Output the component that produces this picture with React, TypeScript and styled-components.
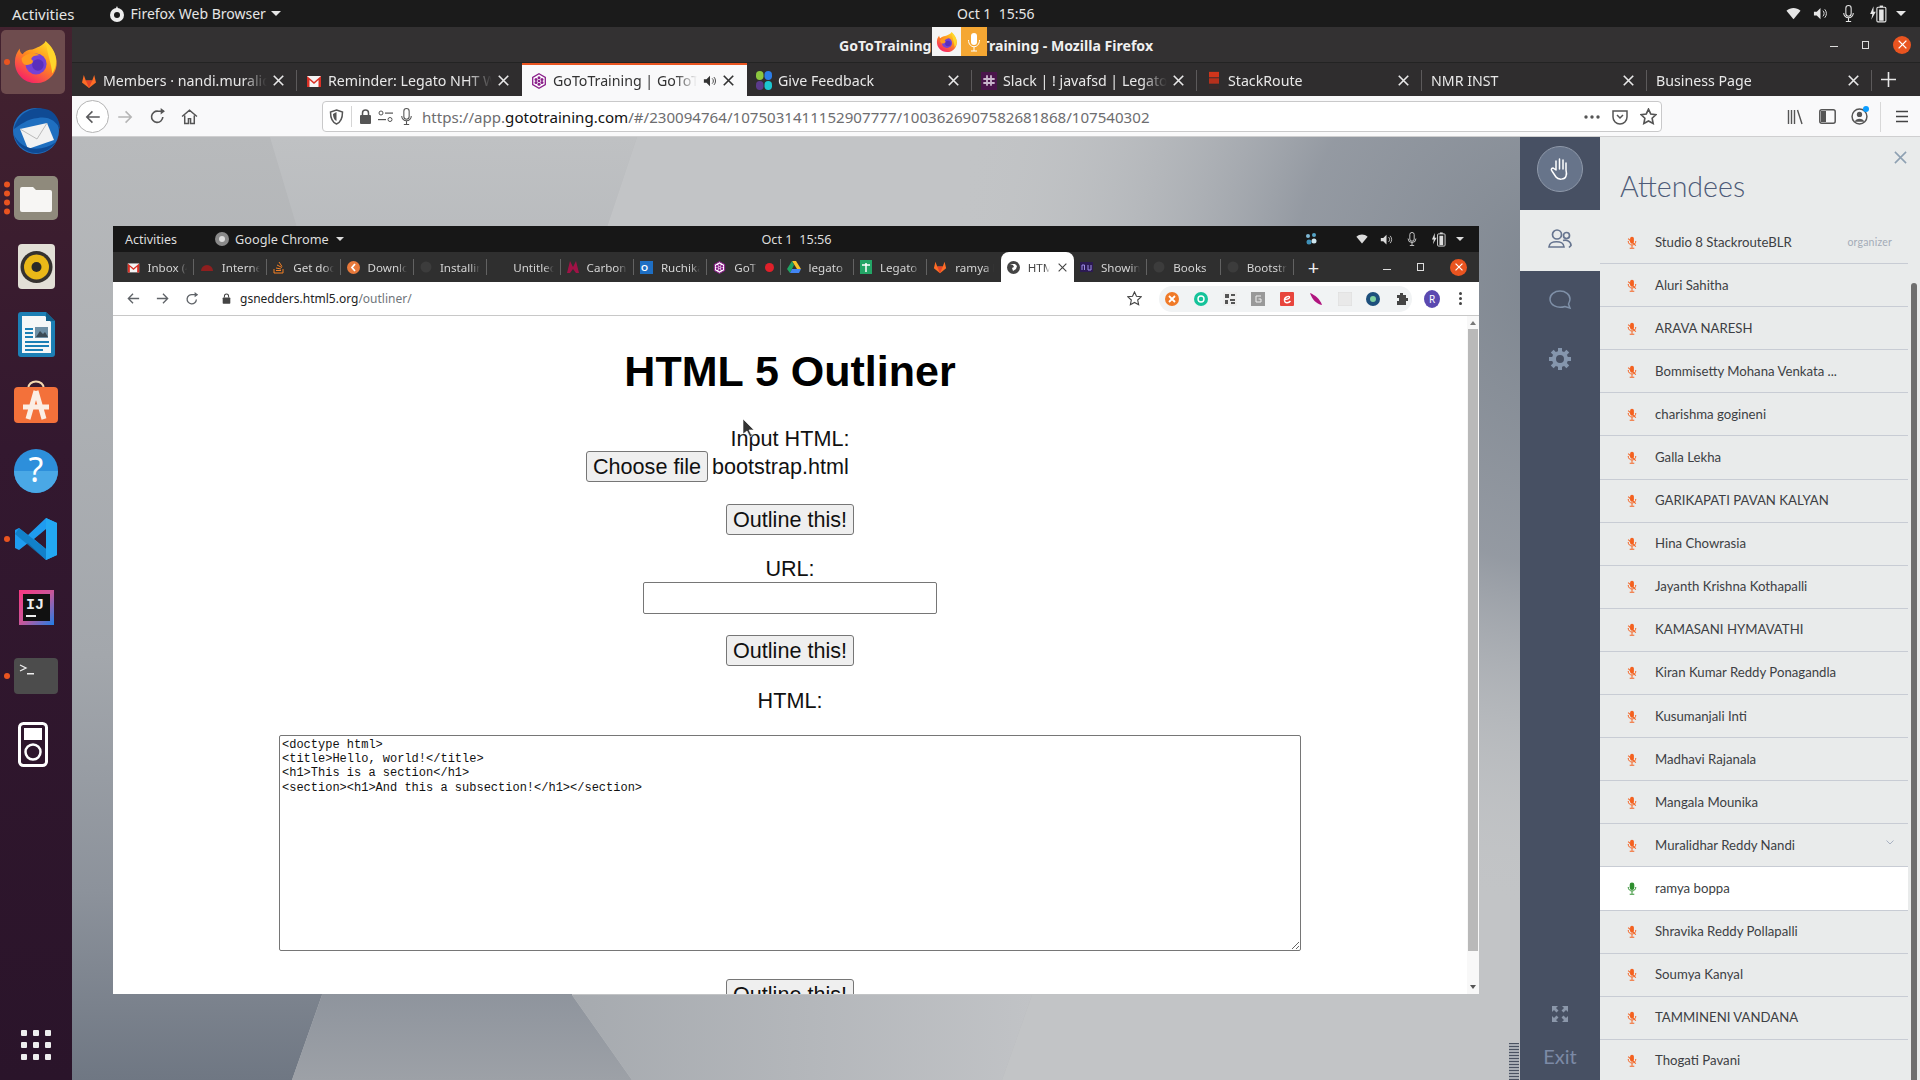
import React from "react";
import styled, { createGlobalStyle } from "styled-components";

const Global = createGlobalStyle`
  html, body { margin: 0; padding: 0; width: 1920px; height: 1080px; overflow: hidden; background: #000; }
  #root { width: 1920px; height: 1080px; }
  * { box-sizing: border-box; }
`;

const UI = `"Noto Sans", "Open Sans", sans-serif`;

const Screen = styled.div`
  width: 1920px; height: 1080px; display: flex; flex-direction: column; overflow: hidden; font-family: ${UI};
`;
const TopBar = styled.header`
  height: 27px; flex: none; background: #1b1b1b; color: #e6e6e6; display: grid; grid-template-columns: 945px auto 1fr;
  align-items: center; font-size: 14px; padding: 0 14px 0 12px;
`;
const TopLeft = styled.div`display: flex; align-items: center;`;
const ActivitiesLabel = styled.span`font-size: 15px;`;
const InnerActivities = styled.span`font-size: 12.5px;`;
const AppMenu = styled.div`display: flex; align-items: center; gap: 6px; margin-left: 34px;`;
const Caret = styled.span<{ $s?: number; $ml?: number }>`
  display: inline-block; width: 0; height: 0; border-left: ${p => p.$s ?? 5}px solid transparent; border-right: ${p => p.$s ?? 5}px solid transparent;
  border-top: ${p => p.$s ?? 5}px solid currentColor; margin-left: ${p => p.$ml ?? 4}px;
`;
const Tray = styled.div<{ $gap?: number }>`display: flex; align-items: center; justify-content: flex-end; gap: ${p => p.$gap ?? 12}px;`;
const Body = styled.div`flex: 1; display: flex; min-height: 0;`;
const Dock = styled.nav`
  width: 72px; flex: none; background: linear-gradient(180deg, #43222f 0%, #33182f 40%, #2a142a 100%);
  display: flex; flex-direction: column; padding-top: 1px;
`;
const DockItem = styled.div`
  height: 68.2px; flex: none; display: flex; align-items: center; justify-content: center; position: relative;
`;
const ActiveTile = styled.div`
  width: 64px; height: 64px; border-radius: 5px; background: #6e4c4e; display: flex; align-items: center; justify-content: center; margin-left: -6px; padding-left: 6px;
`;
const Dots = styled.div`
  position: absolute; left: 4px; top: 50%; transform: translateY(-50%); display: flex; flex-direction: column; gap: 3px;
`;
const Dot = styled.span`width: 6px; height: 6px; border-radius: 50%; background: #e95420; display: block;`;
const DockSpacer = styled.div`flex: 1;`;
const AppGrid = styled.div`
  display: grid; grid-template-columns: repeat(3, 6px); gap: 6px; justify-content: center; padding-bottom: 20px;
  span { width: 6px; height: 6px; background: #eee; border-radius: 1px; display: block; }
`;
const FirefoxWin = styled.main`flex: 1; display: flex; flex-direction: column; min-width: 0;`;
const TitleBar = styled.div`
  height: 36px; flex: none; background: #333132; color: #f0f0f0; display: grid; grid-template-columns: 1fr auto 1fr; align-items: center;
  font-size: 14.1px; font-weight: 700; position: relative; border-bottom: 1px solid #232323;
`;
const TitleText = styled.span`grid-column: 2; padding-top: 2px;`;
const Share = styled.div`position: absolute; left: 860px; top: 0; height: 29px; display: flex;`;
const ShareFox = styled.div`width: 29px; background: #f4f4f4; display: flex; align-items: center; justify-content: center;`;
const ShareMic = styled.div`width: 26px; background: #f5a733; display: flex; align-items: center; justify-content: center;`;
const WinBtns = styled.div<{ $gap?: number }>`
  grid-column: 3; display: flex; align-items: center; justify-content: flex-end; gap: ${p => p.$gap ?? 24}px; padding-right: 9px;
`;
const MinBtn = styled.span`width: 8px; height: 1px; background: #ddd; display: block; margin-top: 4px;`;
const RestoreBtn = styled.span`width: 7px; height: 8px; border: 1px solid #ddd; display: block;`;
const CloseBtn = styled.span<{ $s?: number }>`
  width: ${p => p.$s ?? 18}px; height: ${p => p.$s ?? 18}px; border-radius: 50%; background: #e95420; color: #fff; display: flex; align-items: center; justify-content: center;
`;
const TabStrip = styled.div`height: 33px; flex: none; display: flex; background: #2f2d2e; align-items: stretch;`;
const Tab = styled.div<{ $active?: boolean; $sep?: boolean }>`
  width: 225px; flex: none; display: flex; align-items: center; gap: 6px; padding: 0 13px 0 9px; font-size: 14.2px; position: relative;
  color: ${p => (p.$active ? "#333" : "#e8e8e8")};
  background: ${p => (p.$active ? "#f9f9fa" : "transparent")};
  border-top: 2px solid ${p => (p.$active ? "#e95420" : "transparent")};
  ${p => p.$sep && `&::after { content: ""; position: absolute; right: 0; top: 5px; bottom: 5px; width: 1px; background: #5c5a5b; }`}
`;
const TabTitle = styled.span`
  flex: 1; white-space: nowrap; overflow: hidden; min-width: 0; margin-left: 0;
  mask-image: linear-gradient(90deg, #000 85%, transparent 100%);
`;
const NewTab = styled.div`flex: 1; display: flex; align-items: center; justify-content: flex-start; padding-left: 9px; color: #e8e8e8;`;
const NavBar = styled.div`
  height: 41px; flex: none; background: #f9f9fa; display: flex; align-items: center; padding: 1px 0 0 4px; border-bottom: 1px solid #cfcfd0; color: #5a5a5c;
`;
const BackBtn = styled.div`
  width: 33px; height: 33px; border-radius: 50%; border: 1px solid #b4b4b4; background: #fff; display: flex; align-items: center; justify-content: center;
`;
const NavIcon = styled.div<{ $w?: number; $dim?: boolean }>`
  width: ${p => p.$w ?? 32}px; flex: none; display: flex; align-items: center; justify-content: center; position: relative; color: ${p => (p.$dim ? "#b5b5b5" : "#555")};
`;
const UrlBar = styled.div`
  width: 1340px; height: 31px; margin-left: 117px; flex: none; background: #fff; border: 1px solid #c9c9ca; border-radius: 4px;
  display: flex; align-items: center; padding: 0 4px 0 6px; font-size: 15.1px; color: #6d6d6f;
`;
const UrlSep = styled.span`width: 1px; height: 21px; background: #d5d5d5; margin: 0 7px;`;
const UrlPerm = styled.svg`margin-left: 6px;`;
const UrlMic = styled.span`display: flex; color: #555; margin-left: 5px;`;
const UrlText = styled.span`flex: 1; white-space: nowrap; margin-left: 7px; b { color: #111; font-weight: 400; }`;
const UrlAction = styled.svg`margin-left: 12px;`;
const NavRight = styled.div`flex: 1; display: flex; align-items: center; justify-content: flex-end; padding-right: 3px;`;
const NavSep = styled.span`width: 1px; height: 30px; background: #d8d8d8; margin: 0 6px 0 5px;`;
const SyncDot = styled.span`position: absolute; right: 6px; top: -2px; width: 6px; height: 6px; border-radius: 50%; background: #0a9dff;`;
const Content = styled.div`flex: 1; display: flex; min-height: 0;`;
const Desktop = styled.section`
  flex: 1; position: relative; padding: 90px 41px 0 41px; overflow: hidden; background: #a9acb0;
`;
const Wallpaper = styled.svg`position: absolute; left: 0; top: 0;`;
const Grip = styled.div`
  position: absolute; right: 1px; bottom: 0; width: 10px; height: 37px; background: repeating-linear-gradient(180deg, #4a5261 0 1px, #a8adb4 1px 3px);
`;
const ChromeWin = styled.div`height: 768px; position: relative; display: flex; flex-direction: column; background: #fff; margin-top: -1px;`;
const InnerTop = styled.div`
  height: 26px; flex: none; background: #171717; color: #ddd; font-size: 12.7px; display: grid; grid-template-columns: 1fr auto 1fr; align-items: center; padding: 0 15px 0 12px;
`;
const InnerApp = styled.div`display: flex; align-items: center; gap: 6px; margin-left: 38px; svg { flex: none; }`;
const InnerDate = styled.span`padding-left: 4px;`;
const TraySlack = styled.svg`margin-right: 26px;`;
const InnerTabs = styled.div`height: 30px; flex: none; background: #2f2f2f; display: flex; padding-left: 7.5px;`;
const ITab = styled.div<{ $active?: boolean; $sep?: boolean }>`
  width: 73.35px; flex: none; display: flex; align-items: center; gap: 8px; padding: 0 7px 0 6px; font-size: 11.6px; position: relative;
  color: ${p => (p.$active ? "#444" : "#d5d5d5")};
  background: ${p => (p.$active ? "#fff" : "transparent")};
  border-radius: ${p => (p.$active ? "8px 8px 0 0" : "0")};
  ${p => p.$sep && `&::after { content: ""; position: absolute; right: 0; top: 7px; bottom: 7px; width: 1px; background: #626262; }`}
`;
const ITabTitle = styled.span`
  flex: 1; white-space: nowrap; overflow: hidden; min-width: 0; mask-image: linear-gradient(90deg, #000 75%, transparent 100%);
`;
const RecDot = styled.span`width: 9px; height: 9px; border-radius: 50%; background: #e0202a; flex: none;`;
const IPlus = styled.div`width: 39px; display: flex; align-items: center; justify-content: center; color: #eee; font-size: 20px;`;
const IWin = styled.div`flex: 1; display: flex; align-items: center; justify-content: flex-end; gap: 26px; padding-right: 12px;`;
const IToolbar = styled.div`
  height: 34px; flex: none; background: #fff; border-bottom: 1px solid #c8c8c8; display: flex; align-items: center; padding-left: 6px; color: #5f6368;
`;
const INav = styled.div`width: 29px; flex: none; display: flex; align-items: center; justify-content: center;`;
const IUrl = styled.div`
  width: 911px; flex: none; display: flex; align-items: center; gap: 9px; padding-left: 16px; font-size: 12px; color: #222;
  span { color: #70757a; }
`;
const IStar = styled.div`width: 33px; flex: none; display: flex; justify-content: flex-end; color: #444; margin-left: -8px;`;
const ExtPill = styled.div`
  width: 253px; height: 26px; margin-left: 17px; flex: none; background: #f1f3f4; border-radius: 13px; display: flex; align-items: center; justify-content: space-between; padding: 0 3px 0 6px;
`;
const Avatar = styled.div`
  width: 16px; height: 18px; flex: none; border-radius: 50%; background: #5b49b0; color: #fff; font-size: 10px; display: flex; align-items: center; justify-content: center; margin-left: 12px;
`;
const Kebab = styled.div`
  margin-left: 19px; display: flex; flex-direction: column; gap: 2px;
  span { width: 3px; height: 3px; border-radius: 50%; background: #444; display: block; }
`;
const PageWrap = styled.div`flex: 1; display: flex; min-height: 0; position: relative;`;
const Page = styled.div`
  flex: 1; overflow: hidden; display: flex; flex-direction: column; align-items: center; font-family: "Liberation Sans", Arial, sans-serif; color: #111; font-size: 21.6px; line-height: 25px; padding-top: 31px;
`;
const Heading = styled.h1`margin: 0 0 31px; font-size: 43px; line-height: 48px; font-weight: 700; color: #000;`;
const Label = styled.div`height: 25px; flex: none;`;
const FileRow = styled.div`width: 408px; height: 31px; flex: none; display: flex; align-items: center; gap: 4px; margin: 0 0 22px;`;
const Btn = styled.button`
  height: 31px; flex: none; padding: 0 6px; font: 21.6px "Liberation Sans", Arial, sans-serif; color: #111; background: #efefef; border: 1px solid #767676; border-radius: 3px;
`;
const UrlField = styled.input`width: 294px; height: 32px; flex: none; border: 1px solid #767676; border-radius: 2px; background: #fff; margin: 1px 0 21px;`;
const Area = styled.textarea`
  width: 1022px; height: 216px; flex: none; resize: both; border: 1px solid #767676; border-radius: 2px; padding: 2px; font: 12px/14.2px "Liberation Mono", monospace; color: #111;
  overflow: hidden; margin: 22px 0 28px;
`;
const Gap = styled.div<{ $h: number }>`height: ${p => p.$h}px; flex: none;`;
const ScrollCol = styled.div`width: 12px; flex: none; background: #f8f8f8; display: flex; flex-direction: column; align-items: center; padding: 5px 1px 5px 1px;`;
const ScrollUp = styled.div`width: 0; height: 0; flex: none; border: 3px solid transparent; border-top: 0; border-bottom: 4px solid #777;`;
const ScrollDown = styled.div`width: 0; height: 0; flex: none; border: 3px solid transparent; border-bottom: 0; border-top: 4px solid #555;`;
const ScrollThumb = styled.div`width: 10px; height: 622px; margin-top: 4px; background: #b9b9b9; flex: none;`;
const ScrollRest = styled.div`flex: 1;`;
const Cursor = styled.svg`position: absolute; left: 629px; top: 102px;`;
const Rail = styled.aside`width: 80px; flex: none; background: #475063; display: flex; flex-direction: column; align-items: center;`;
const HandWrap = styled.div`height: 73px; flex: none; display: flex; align-items: flex-start; justify-content: center; padding-top: 9px;`;
const HandBtn = styled.div`
  width: 46px; height: 46px; border-radius: 50%; background: #67748a; border: 1px solid #8f99aa; display: flex; align-items: center; justify-content: center;
`;
const RailActive = styled.div`height: 61px; width: 100%; flex: none; background: #e9ebeb; display: flex; align-items: center; justify-content: center; padding-bottom: 3px;`;
const RailItem = styled.div`height: 59px; flex: none; display: flex; align-items: center; justify-content: center; padding-bottom: 2px;`;
const RailSpacer = styled.div`flex: 1;`;
const Exit = styled.div`font-family: Lato, sans-serif; font-size: 20px; color: #7c8aa6; padding: 22px 0 12px;`;
const Panel = styled.div`width: 320px; flex: none; background: #e9ebeb; display: flex; flex-direction: column; min-height: 0;`;
const PanelHead = styled.div`
  height: 84px; flex: none; display: flex; align-items: flex-start; justify-content: space-between; padding: 26px 13px 0 20px;
`;
const PanelTitle = styled.div`font-family: Lato, sans-serif; font-weight: 300; font-size: 28.6px; line-height: 46px; color: #4e5b78;`;
const PanelClose = styled.div`color: #8ea0b2; margin-top: -16px;`;
const PanelBody = styled.div`flex: 1; display: flex; min-height: 0;`;
const List = styled.div`width: 308px; flex: none; overflow: hidden;`;
const Row = styled.div<{ $on?: boolean }>`
  height: 43.1px; display: flex; align-items: center; padding: 0 16px 1px 27px; font-family: Lato, sans-serif; font-size: 13.2px; color: #3d3f44;
  background: ${p => (p.$on ? "#fff" : "transparent")}; border-bottom: 1px solid #c8ccd4;
`;
const RowMic = styled.div`width: 28px; flex: none; display: flex; margin-top: 1px;`;
const RowName = styled.div`flex: 1; white-space: nowrap;`;
const Organizer = styled.span`font-size: 10.5px; color: #a4acb8; letter-spacing: .2px;`;
const Chevron = styled.span`color: #a9b2c2; display: flex; margin: -4px -2px 0 0;`;
const Track = styled.div`flex: 1; padding: 62px 3px 0 3px; display: flex;`;
const TrackThumb = styled.div`flex: 1; background: #6f6f6f; border-radius: 3px 3px 0 0;`;
const StackSlot = styled.span`width: 16px; flex: none; display: flex; justify-content: center;`;
const IpodSlot = styled.span`display: flex; margin: 2px 6px 0 0;`;

/* ---------- drawings ---------- */
const Fox: React.FC<{ s: number }> = ({ s }) => (
  <svg width={s} height={s} viewBox="0 0 48 48">
    <defs>
      <linearGradient id="fxa" x1="0.8" y1="0" x2="0.2" y2="1">
        <stop offset="0" stopColor="#ffe226" /><stop offset=".45" stopColor="#ff8a1f" /><stop offset="1" stopColor="#f5166f" />
      </linearGradient>
    </defs>
    <path d="M34 2c2 5 9 9 11 18 3 14-7 26-21 26C11 46 2 36 2 24c0-6 2-10 5-14 0 3 1 5 3 6 2-3 6-5 10-5 4-2 12-4 14-9z" fill="url(#fxa)" />
    <path d="M34 2c6 5 11 12 11 21 0 6-2 10-4 13-1-10-5-20-7-34z" fill="#ffd52b" />
    <circle cx="24" cy="26" r="11" fill="#7442d6" />
    <circle cx="26" cy="27" r="6" fill="#5a2fbc" />
    <path d="M9 20c5-5 13-7 19-3-5 0-8 1-9 4 4 2 1 6-5 6-3 0-5-3-5-7z" fill="#ff9a1f" />
  </svg>
);
const Gitlab: React.FC<{ s?: number }> = ({ s = 16 }) => (
  <svg width={s} height={s} viewBox="0 0 16 16" style={{ flex: "none" }}>
    <path d="M8 15L1 9.5 2.8 2l2 5.5h6.4L13.2 2 15 9.5z" fill="#fc6d26" /><path d="M8 15L4.8 7.5h6.4z" fill="#e24329" />
  </svg>
);
const Gmail: React.FC<{ s?: number }> = ({ s = 16 }) => (
  <svg width={s} height={s} viewBox="0 0 16 16" style={{ flex: "none" }}>
    <rect x="1" y="3" width="14" height="11" fill="#f4f4f4" /><path d="M1 3l7 6 7-6v11h-2.500V7L8 11 3.500 7v7H1z" fill="#d93025" />
  </svg>
);
const GoTo: React.FC<{ s?: number }> = ({ s = 16 }) => (
  <svg width={s} height={s} viewBox="0 0 16 16" style={{ flex: "none" }}>
    <path d="M8 .8l6.300 3.600v7.200L8 15.200 1.700 11.600V4.400z" fill="#fff" stroke="#8a1f8a" strokeWidth="1.300" />
    <circle cx="8" cy="8" r="1.300" fill="#8a1f8a" /><circle cx="8" cy="4.800" r="1.500" fill="#8a1f8a" /><circle cx="8" cy="11.200" r="1.500" fill="#8a1f8a" />
    <circle cx="5" cy="6.500" r="1.500" fill="#8a1f8a" /><circle cx="11" cy="6.500" r="1.500" fill="#8a1f8a" /><circle cx="5" cy="9.500" r="1.500" fill="#8a1f8a" /><circle cx="11" cy="9.500" r="1.500" fill="#8a1f8a" />
  </svg>
);
const Feedback = () => (
  <svg width="16" height="19" viewBox="0 0 16 19" style={{ flex: "none" }}>
    <rect x="0" y="0" width="7.500" height="9" rx="3.700" fill="#8cc63f" /><rect x="8.500" y="0" width="7.500" height="9" rx="3.700" fill="#2b7de9" />
    <rect x="0" y="10" width="7.500" height="9" rx="3.700" fill="#5b3a8c" /><rect x="8.500" y="10" width="7.500" height="9" rx="3.700" fill="#1cc6d0" />
  </svg>
);
const Slack = () => (
  <svg width="16" height="18" viewBox="0 0 16 18" style={{ flex: "none" }}>
    <rect width="16" height="18" fill="#4a154b" />
    <g stroke="#c9b6cc" strokeWidth="1.800" strokeLinecap="round"><path d="M6 4v9M10 4v9M3 7h10M3 11h10" /></g>
  </svg>
);
const Stack = () => (
  <StackSlot>
    <svg width="10" height="19" viewBox="0 0 11 19">
      <rect width="11" height="6" fill="#d1351b" /><rect y="7" width="11" height="6" fill="#b6301c" /><rect y="14" width="11" height="5" fill="#3a2a2a" />
    </svg>
  </StackSlot>
);
const X: React.FC<{ s?: number; w?: number }> = ({ s = 11, w = 1.500 }) => (
  <svg width={s} height={s} viewBox="0 0 10 10" style={{ flex: "none" }}>
    <path d="M.7.7l8.600 8.600M9.300.7L.7 9.300" stroke="currentColor" strokeWidth={w} fill="none" />
  </svg>
);
const Wifi: React.FC<{ s?: number }> = ({ s = 15 }) => (
  <svg width={s} height={s} viewBox="0 0 16 16"><path d="M8 14L.5 5C5 1 11 1 15.500 5z" fill="currentColor" /></svg>
);
const Speaker: React.FC<{ s?: number }> = ({ s = 15 }) => (
  <svg width={s} height={s} viewBox="0 0 16 16"><path d="M1 6h3l4-4v12l-4-4H1z" fill="currentColor" /><path d="M10.500 5a4 4 0 010 6M12.500 3.500a6.500 6.500 0 010 9" stroke="currentColor" fill="none" /></svg>
);
const MicLine: React.FC<{ s?: number }> = ({ s = 17 }) => (
  <svg width={s} height={s} viewBox="0 0 16 16"><rect x="5.500" y=".5" width="5" height="10" rx="2.500" fill="none" stroke="currentColor" /><path d="M3.500 7.500a4.500 4.500 0 009 0M8 12v3M5.500 15.500h5" stroke="currentColor" fill="none" /></svg>
);
const Battery: React.FC<{ s?: number }> = ({ s = 18 }) => (
  <svg width={s} height={s} viewBox="0 0 16 16"><path d="M4 1L1 8h2l-1 5 4-7H4z" fill="currentColor" /><rect x="7" y="2" width="8" height="13" rx="1" fill="none" stroke="currentColor" /><rect x="9" y="4" width="4" height="10" fill="currentColor" /><rect x="9.500" y=".5" width="3" height="1.500" fill="currentColor" /></svg>
);
const Arrow: React.FC<{ s?: number; flip?: boolean }> = ({ s = 18, flip }) => (
  <svg width={s} height={s} viewBox="0 0 16 16" style={flip ? { transform: "scaleX(-1)" } : undefined}>
    <path d="M14 8H2.500M7.500 3l-5 5 5 5" stroke="currentColor" strokeWidth="1.400" fill="none" />
  </svg>
);
const Reload: React.FC<{ s?: number }> = ({ s = 17 }) => (
  <svg width={s} height={s} viewBox="0 0 16 16"><path d="M13 8.500A5.300 5.300 0 118.500 3H14" stroke="currentColor" strokeWidth="1.500" fill="none" /><path d="M11 0l4 3-4 3z" fill="currentColor" /></svg>
);
const MicMuted = () => (
  <svg width="10" height="13" viewBox="0 0 13 17">
    <rect x="4" y="1" width="5" height="9" rx="2.500" fill="#f4611f" />
    <path d="M1.500 6.500c0 7 10 7 10 0M6.500 12v3.500M3.500 16h6" stroke="#f4611f" strokeWidth="1.300" fill="none" />
    <path d="M1.500 3.500l10 9" stroke="#f4611f" strokeWidth="1.400" />
  </svg>
);
const MicOn = () => (
  <svg width="10" height="13" viewBox="0 0 13 17">
    <rect x="3.500" y="0.500" width="6" height="10" rx="3" fill="#2f8f2f" />
    <path d="M1.500 6.500c0 7 10 7 10 0M6.500 12v3.500M3.500 16h6" stroke="#2f8f2f" strokeWidth="1.300" fill="none" />
  </svg>
);

const DesktopArt = () => (
  <Wallpaper width="1448" height="943" viewBox="0 0 1448 943">
    <defs>
      <linearGradient id="wl" x1="0" y1="0" x2="0" y2="1">
        <stop offset="0" stopColor="#b8babc" /><stop offset=".55" stopColor="#a3a7ac" /><stop offset=".8" stopColor="#8c929b" /><stop offset="1" stopColor="#6f7783" />
      </linearGradient>
      <linearGradient id="wm" x1="0" y1="0" x2="0" y2="1">
        <stop offset="0" stopColor="#bfc1c3" /><stop offset=".9" stopColor="#8d939c" /><stop offset="1" stopColor="#9da1a7" />
      </linearGradient>
      <linearGradient id="wc" x1="0" y1="0" x2="1" y2="0">
        <stop offset="0" stopColor="#a6aaaf" /><stop offset="1" stopColor="#c1c3c6" />
      </linearGradient>
      <radialGradient id="wr" gradientUnits="userSpaceOnUse" cx="1500" cy="150" r="620">
        <stop offset="0" stopColor="#7d858f" /><stop offset=".45" stopColor="#8f959e" stopOpacity=".9" /><stop offset="1" stopColor="#c2c4c6" stopOpacity="0" />
      </radialGradient>
    </defs>
    <rect width="1448" height="943" fill="#b9bbbd" />
    <polygon points="565,0 1448,0 1448,943 930,943 960,858 500,858 535,90" fill="#c2c4c6" />
    <rect width="1448" height="943" fill="url(#wr)" />
    <polygon points="0,0 198,0 225,90 250,858 220,943 0,943" fill="url(#wl)" />
    <polygon points="198,0 565,0 535,90 500,858 560,943 220,943 250,858 225,90" fill="url(#wm)" />
    <polygon points="500,858 960,858 930,943 560,943" fill="url(#wc)" />
  </Wallpaper>
);

const Ext: React.FC<{ k: number }> = ({ k }) => {
  const s = { flex: "none" } as const;
  switch (k) {
    case 0: return <svg width="14" height="14" viewBox="0 0 14 14" style={s}><circle cx="7" cy="7" r="7" fill="#f07a28" /><path d="M4 4l6 6M10 4l-6 6" stroke="#fff" strokeWidth="1.800" /></svg>;
    case 1: return <svg width="14" height="14" viewBox="0 0 14 14" style={s}><circle cx="7" cy="7" r="7" fill="#15c39a" /><circle cx="7" cy="7" r="3" fill="none" stroke="#fff" strokeWidth="1.400" /></svg>;
    case 2: return <svg width="14" height="14" viewBox="0 0 14 14" style={s}><rect width="14" height="14" fill="#eee" /><path d="M2 2h4v4H2zM8 2h4v2H8zM2 8h3v4H2zM7 7h5v2H7zM8 10h4v2H8z" fill="#555" /></svg>;
    case 3: return <svg width="14" height="14" viewBox="0 0 14 14" style={s}><rect width="14" height="14" fill="#999" /><path d="M10 4H5v6h5V7H7.500" stroke="#eee" fill="none" /></svg>;
    case 4: return <svg width="14" height="14" viewBox="0 0 14 14" style={s}><rect width="14" height="14" rx="1" fill="#e8453c" /><path d="M4 7.500c3 0 6-1 5.500-2.500S4 5 4.500 8.500 9 11 10.500 9" stroke="#fff" strokeWidth="1.400" fill="none" /></svg>;
    case 5: return <svg width="14" height="14" viewBox="0 0 14 14" style={s}><path d="M1 1c5 2 10 6 12 12-6-1-10-6-12-12z" fill="#b0147e" /></svg>;
    case 6: return <svg width="14" height="14" viewBox="0 0 14 14" style={s}><rect width="14" height="14" fill="#e9e9e9" stroke="#ddd" /></svg>;
    case 7: return <svg width="14" height="14" viewBox="0 0 14 14" style={s}><circle cx="7" cy="7" r="7" fill="#1d4f7c" /><circle cx="7" cy="7" r="3" fill="#7fd0a0" /></svg>;
    default: return <svg width="14" height="14" viewBox="0 0 14 14" style={s}><path d="M5 1h3v2h3v3h2v3h-2v4H2V9h2V6H2V3h3z" fill="#444" /></svg>;
  }
};

const MiniFav: React.FC<{ k: string }> = ({ k }) => {
  const s = { flex: "none" } as const;
  const b = <svg width="12" height="12" viewBox="0 0 12 12" style={s}><circle cx="6" cy="6" r="5.500" fill="#3c3c3c" /></svg>;
  switch (k) {
    case "gmail": return <Gmail s={13} />;
    case "int": return <svg width="14" height="12" viewBox="0 0 14 12" style={s}><path d="M1 10a6 6 0 0112 0z" fill="#8f1f1f" /></svg>;
    case "so": return <svg width="12" height="14" viewBox="0 0 12 14" style={s}><path d="M1 9v4h9V9M3 10.500h5M3 8l5 1M4 5l5 2.500M6 2l3 4.500" stroke="#f48024" fill="none" /></svg>;
    case "dl": return <svg width="13" height="13" viewBox="0 0 13 13" style={s}><circle cx="6.500" cy="6.500" r="6.500" fill="#e8793b" /><path d="M8 3L5 6.500 8 10" stroke="#fff" strokeWidth="1.800" fill="none" /></svg>;
    case "carbon": return <svg width="12" height="12" viewBox="0 0 12 12" style={s}><path d="M0 12L3 0l3 6 3-6 3 12H9L6 8l-3 4z" fill="#a01246" /></svg>;
    case "ol": return <svg width="13" height="13" viewBox="0 0 13 13" style={s}><rect width="13" height="13" fill="#1e6fc4" /><text x="1" y="10" fontSize="9" fontWeight="700" fill="#fff" fontFamily="Liberation Sans">O</text></svg>;
    case "goto": return <GoTo s={13} />;
    case "drive": return <svg width="14" height="12" viewBox="0 0 14 12" style={s}><path d="M5 0h4l5 8h-4z" fill="#f7c32b" /><path d="M5 0l2 4-4 8-3-4z" fill="#1fa463" /><path d="M3 12l2-4h9l-2 4z" fill="#4285f4" /></svg>;
    case "sheet": return <svg width="12" height="14" viewBox="0 0 12 14" style={s}><rect width="12" height="14" fill="#23a566" /><path d="M2 5h8M6 3v9" stroke="#fff" strokeWidth="1.500" /></svg>;
    case "gitlab": return <Gitlab s={14} />;
    case "globe": return <svg width="13" height="13" viewBox="0 0 13 13" style={s}><circle cx="6.500" cy="6.500" r="6.500" fill="#444" /><path d="M3 3l3 1 1 2-2 1 1 3 3-2 1-3-2-2" fill="#fff" /></svg>;
    case "nu": return <svg width="13" height="10" viewBox="0 0 13 10" style={s}><rect width="13" height="10" fill="#2c1a52" /><path d="M2 8V3h2.500v5M8 3v5h3V3" stroke="#9d8ce8" fill="none" /></svg>;
    case "none": return <svg width="12" height="12" viewBox="0 0 12 12" style={s} />;
    default: return b;
  }
};

const tabs = [
  { t: "Members · nandi.muralidhar", i: <Gitlab />, sep: true },
  { t: "Reminder: Legato NHT Wave", i: <Gmail /> },
  { t: "GoToTraining | GoToTraining", i: <GoTo />, active: true, sound: true },
  { t: "Give Feedback", i: <Feedback />, sep: true },
  { t: "Slack | ! javafsd | Legato NHT", i: <Slack />, sep: true },
  { t: "StackRoute", i: <Stack />, sep: true },
  { t: "NMR INST", sep: true },
  { t: "Business Page", sep: true },
];

const itabs = [
  ["Inbox (42)", "gmail"], ["Internet", "int"], ["Get docs", "so"], ["Download", "dl"], ["Installing", "blank"], ["Untitled", "none"],
  ["Carbon", "carbon"], ["Ruchika", "ol"], ["GoT", "goto"], ["legato", "drive"], ["Legato", "sheet"], ["ramya b", "gitlab"],
  ["HTML", "globe"], ["Showing", "nu"], ["Books", "blank"], ["Bootstrap", "blank"],
];

const people = [
  "Studio 8 StackrouteBLR", "Aluri Sahitha", "ARAVA NARESH", "Bommisetty Mohana Venkata ...", "charishma gogineni", "Galla Lekha",
  "GARIKAPATI PAVAN KALYAN", "Hina Chowrasia", "Jayanth Krishna Kothapalli", "KAMASANI HYMAVATHI", "Kiran Kumar Reddy Ponagandla",
  "Kusumanjali Inti", "Madhavi Rajanala", "Mangala Mounika", "Muralidhar Reddy Nandi", "ramya boppa", "Shravika Reddy Pollapalli",
  "Soumya Kanyal", "TAMMINENI VANDANA", "Thogati Pavani",
];

const dockIcons: React.ReactNode[] = [
  <ActiveTile><Fox s={46} /></ActiveTile>,
  <svg width="50" height="50" viewBox="0 0 50 50"><circle cx="25" cy="26" r="23" fill="#1f6fc0" /><path d="M3 24C6 8 24-2 40 6c6 4 9 11 9 19-3-9-12-14-22-12C16 14 9 20 3 24z" fill="#0f4a94" /><path d="M9 24l27-6 7 17-26 9z" fill="#f2f2f2" /><path d="M9 24l17 10 10-16" stroke="#bbb" fill="none" /><path d="M3 30c2 10 12 19 24 18 8-1 14-5 18-11-8 6-18 8-26 6-8-2-13-7-16-13z" fill="#0f4a94" /></svg>,
  <svg width="44" height="44" viewBox="0 0 44 44"><rect width="44" height="44" rx="5" fill="#8f8a7c" /><path d="M6 13a2 2 0 012-2h11l3 3h14a2 2 0 012 2v18a2 2 0 01-2 2H8a2 2 0 01-2-2z" fill="#f7f6f4" /></svg>,
  <svg width="37" height="45" viewBox="0 0 37 45"><rect width="37" height="45" rx="4" fill="#e2dfd6" /><circle cx="18.500" cy="23" r="16" fill="#35322f" /><circle cx="18.500" cy="23" r="12.500" fill="#eab818" /><circle cx="18.500" cy="23" r="5" fill="#2b2a28" /></svg>,
  <svg width="37" height="45" viewBox="0 0 37 45"><path d="M3 0h25l9 9v33a3 3 0 01-3 3H3a3 3 0 01-3-3V3a3 3 0 013-3z" fill="#1c7fb5" /><path d="M4 4h23l6 6v31H4z" fill="#f5f7f8" /><path d="M28 0l9 9h-9z" fill="#135f8a" /><rect x="7" y="16" width="8" height="2" fill="#1c7fb5" /><rect x="7" y="20" width="8" height="2" fill="#1c7fb5" /><rect x="7" y="24" width="8" height="2" fill="#1c7fb5" /><rect x="17" y="15" width="13" height="11" fill="#6e8fa5" /><path d="M18 25l4-6 3 3 2-2 3 5z" fill="#3a4a55" /><rect x="7" y="29" width="24" height="2" fill="#1c7fb5" /><rect x="7" y="33" width="24" height="2" fill="#1c7fb5" /><rect x="7" y="37" width="18" height="2" fill="#1c7fb5" /></svg>,
  <svg width="44" height="46" viewBox="0 0 44 46"><path d="M14 9c0-10 16-10 16 0" stroke="#f5d9b0" strokeWidth="2" fill="none" /><rect y="7" width="44" height="36" rx="4" fill="#f3713a" /><path d="M22 11l-8 28M22 11l8 28M9 27h26" stroke="#fbeee4" strokeWidth="5" fill="none" /></svg>,
  <svg width="44" height="44" viewBox="0 0 44 44"><circle cx="22" cy="22" r="22" fill="#2d8fdb" /><path d="M0 22h44a22 22 0 01-44 0z" fill="#4aa8e6" /><text x="22" y="33" textAnchor="middle" fontSize="34" fill="#fff" fontFamily="Noto Sans">?</text></svg>,
  <svg width="44" height="44" viewBox="0 0 44 44"><path d="M32 1l11 5v32l-11 5-18-17-9 7-4-2V13l4-2 9 7zM32 12L20 22l12 10z" fill="#1f9cf0" /><path d="M32 1l11 5v32l-11 5z" fill="#23a8f2" /><path d="M5 11l27 21v11L1 17z" fill="#0f7bc0" opacity=".8" /></svg>,
  <svg width="35" height="35" viewBox="0 0 35 35"><defs><linearGradient id="ij" x1="0" y1="0" x2="1" y2="1"><stop offset="0" stopColor="#f8367f" /><stop offset=".5" stopColor="#c9579a" /><stop offset="1" stopColor="#1e7fe8" /></linearGradient></defs><rect width="35" height="35" fill="url(#ij)" /><rect x="4" y="4" width="27" height="27" fill="#111" /><text x="7" y="19" fontSize="15" fontWeight="700" fill="#eee" fontFamily="Liberation Mono">IJ</text><rect x="7" y="25" width="10" height="2" fill="#eee" /></svg>,
  <svg width="44" height="36" viewBox="0 0 44 36"><rect width="44" height="36" rx="4" fill="#4c4c4c" /><path d="M6 7l6 3-6 3" stroke="#eee" fill="none" strokeWidth="1.300" /><rect x="13" y="15" width="7" height="1.500" fill="#eee" /></svg>,
  <IpodSlot><svg width="30" height="45" viewBox="0 0 30 45"><rect x="1.500" y="1.500" width="27" height="42" rx="4" fill="none" stroke="#fff" strokeWidth="3" /><rect x="6" y="6" width="18" height="12" fill="#fff" /><circle cx="15" cy="30" r="7.500" fill="none" stroke="#fff" strokeWidth="2.500" /></svg></IpodSlot>,
];
const dockDots = [1, 0, 4, 0, 0, 0, 0, 1, 0, 1, 0];

export default function App() {
  return (
    <Screen>
      <Global />
      <TopBar>
        <TopLeft>
          <ActivitiesLabel>Activities</ActivitiesLabel>
          <AppMenu>
            <svg width="16" height="16" viewBox="0 0 16 16"><circle cx="8" cy="9" r="7" fill="#eee" /><circle cx="8" cy="9" r="3" fill="#1b1b1b" /><path d="M8 0c1 3 2 3 3 4H6z" fill="#eee" /></svg>
            <span>Firefox Web Browser</span><Caret $ml={-1} />
          </AppMenu>
        </TopLeft>
        <span>Oct 1&nbsp; 15:56</span>
        <Tray><Wifi /><Speaker /><MicLine /><Battery /><Caret $s={5} $ml={-3} /></Tray>
      </TopBar>
      <Body>
        <Dock>
          {dockIcons.map((icon, i) => (
            <DockItem key={i}>
              {dockDots[i] > 0 && <Dots>{Array.from({ length: dockDots[i] }).map((_, j) => <Dot key={j} />)}</Dots>}
              {icon}
            </DockItem>
          ))}
          <DockSpacer />
          <AppGrid>{Array.from({ length: 9 }).map((_, i) => <span key={i} />)}</AppGrid>
        </Dock>
        <FirefoxWin>
          <TitleBar>
            <TitleText>GoToTraining | GoToTraining - Mozilla Firefox</TitleText>
            <WinBtns>
              <MinBtn /><RestoreBtn /><CloseBtn><X s={9} /></CloseBtn>
            </WinBtns>
            <Share>
              <ShareFox><Fox s={22} /></ShareFox>
              <ShareMic>
                <svg width="14" height="20" viewBox="0 0 14 20"><rect x="4" y="1" width="6" height="12" rx="3" fill="#fff" /><path d="M1.500 8c0 9 11 9 11 0M7 15v4M4 19h6" stroke="#fff" fill="none" /></svg>
              </ShareMic>
            </Share>
          </TitleBar>
          <TabStrip>
            {tabs.map(t => (
              <Tab key={t.t} $active={t.active} $sep={t.sep}>
                {t.i}
                <TabTitle>{t.t}</TabTitle>
                {t.sound && <Speaker s={14} />}
                <X />
              </Tab>
            ))}
            <NewTab><svg width="15" height="15" viewBox="0 0 15 15"><path d="M7.500 0v15M0 7.500h15" stroke="currentColor" strokeWidth="1.600" /></svg></NewTab>
          </TabStrip>
          <NavBar>
            <BackBtn><Arrow /></BackBtn>
            <NavIcon $dim><Arrow flip /></NavIcon>
            <NavIcon><Reload /></NavIcon>
            <NavIcon>
              <svg width="17" height="17" viewBox="0 0 16 16"><path d="M1 8l7-6 7 6M3.500 7v7.500h3.500V10h2v4.500h3.500V7" stroke="currentColor" strokeWidth="1.400" fill="none" /></svg>
            </NavIcon>
            <UrlBar>
              <svg width="15" height="16" viewBox="0 0 15 16"><path d="M7.500 1l6 2c0 6-1 10-6 12C2.500 13 1.500 9 1.500 3z" fill="none" stroke="#555" strokeWidth="1.500" /><path d="M7.500 3v9C5 11 4 8 4 5z" fill="#555" /></svg>
              <UrlSep />
              <svg width="13" height="15" viewBox="0 0 13 15"><rect x="1" y="6" width="11" height="9" rx="1" fill="#555" /><path d="M3.500 6V4a3 3 0 016 0v2" fill="none" stroke="#555" strokeWidth="1.500" /></svg>
              <UrlPerm width="15" height="13" viewBox="0 0 15 13"><circle cx="3" cy="3" r="2" fill="none" stroke="#555" /><rect x="7" y="2.500" width="8" height="1.200" fill="#555" /><rect y="9" width="8" height="1.200" fill="#555" /><circle cx="12" cy="9.500" r="2" fill="none" stroke="#555" /></UrlPerm>
              <UrlMic><MicLine s={17} /></UrlMic>
              <UrlText>https://app.<b>gototraining.com</b>/#/230094764/1075031411152907777/1003626907582681868/107540302</UrlText>
              <svg width="16" height="4" viewBox="0 0 16 4"><circle cx="2" cy="2" r="1.700" fill="#555" /><circle cx="8" cy="2" r="1.700" fill="#555" /><circle cx="14" cy="2" r="1.700" fill="#555" /></svg>
              <UrlAction width="16" height="16" viewBox="0 0 16 16"><path d="M1 2h14v6a7 7 0 01-14 0z" fill="none" stroke="#555" strokeWidth="1.500" /><path d="M5 6l3 3 3-3" stroke="#555" strokeWidth="1.500" fill="none" /></UrlAction>
              <UrlAction width="17" height="17" viewBox="0 0 16 16"><path d="M8 1l2.100 4.600 5 .6-3.700 3.400 1 5L8 12.200 3.600 14.600l1-5L.9 6.200l5-.6z" fill="none" stroke="#555" strokeWidth="1.500" /></UrlAction>
            </UrlBar>
            <NavRight>
              <NavIcon>
                <svg width="16" height="16" viewBox="0 0 16 16"><path d="M1.500 1v14M4.500 1v14M7.500 1v14M10.500 1L15 15" stroke="#555" strokeWidth="1.400" fill="none" /></svg>
              </NavIcon>
              <NavIcon>
                <svg width="17" height="15" viewBox="0 0 17 15"><rect x=".8" y=".8" width="15.400" height="13.400" rx="2" fill="none" stroke="#555" strokeWidth="1.500" /><rect x="2" y="2" width="5" height="11" fill="#555" /></svg>
              </NavIcon>
              <NavIcon>
                <svg width="17" height="17" viewBox="0 0 16 16"><circle cx="8" cy="8" r="7" fill="none" stroke="#555" strokeWidth="1.400" /><circle cx="8" cy="6" r="2.500" fill="#555" /><path d="M3.500 13c1-4 8-4 9 0" fill="#555" /></svg>
                <SyncDot />
              </NavIcon>
              <NavSep />
              <NavIcon $w={30}>
                <svg width="14" height="13" viewBox="0 0 14 13"><path d="M1 1.500h12M1 6.500h12M1 11.500h12" stroke="#444" strokeWidth="1.700" /></svg>
              </NavIcon>
            </NavRight>
          </NavBar>
          <Content>
            <Desktop>
              <DesktopArt />
              <ChromeWin>
                <InnerTop>
                  <TopLeft>
                    <InnerActivities>Activities</InnerActivities>
                    <InnerApp>
                      <svg width="14" height="14" viewBox="0 0 14 14"><circle cx="7" cy="7" r="7" fill="#8a8a8a" /><circle cx="7" cy="7" r="3" fill="#ddd" /></svg>
                      <span>Google Chrome</span><Caret $s={4} $ml={1} />
                    </InnerApp>
                  </TopLeft>
                  <InnerDate>Oct 1&nbsp; 15:56</InnerDate>
                  <Tray $gap={12}>
                    <TraySlack width="14" height="14" viewBox="0 0 14 14"><circle cx="4" cy="4" r="2" fill="#7fb9d6" /><circle cx="10" cy="3" r="2" fill="#55a5c8" /><circle cx="5" cy="10" r="2.500" fill="#3e90b8" /><circle cx="10" cy="9" r="2.500" fill="#cfe6ef" /></TraySlack>
                    <Wifi s={12} /><Speaker s={13} /><MicLine s={14} /><Battery s={15} /><Caret $s={4} $ml={-2} />
                  </Tray>
                </InnerTop>
                <InnerTabs>
                  {itabs.map(([t, k], i) => (
                    <ITab key={i} $active={k === "globe"} $sep={i !== 12 && i !== 11}>
                      <MiniFav k={k} />
                      <ITabTitle>{t}</ITabTitle>
                      {t === "GoT" && <RecDot />}
                      {k === "globe" && <X s={9} w={1.200} />}
                    </ITab>
                  ))}
                  <IPlus>+</IPlus>
                  <IWin><MinBtn /><RestoreBtn /><CloseBtn $s={17}><X s={8} /></CloseBtn></IWin>
                </InnerTabs>
                <IToolbar>
                  <INav><Arrow s={15} /></INav>
                  <INav><Arrow s={15} flip /></INav>
                  <INav><Reload s={14} /></INav>
                  <IUrl>
                    <svg width="9" height="11" viewBox="0 0 13 15"><rect x="1" y="6" width="11" height="9" rx="1" fill="#444" /><path d="M3.500 6V4a3 3 0 016 0v2" fill="none" stroke="#444" strokeWidth="1.500" /></svg>
                    <div>gsnedders.html5.org<span>/outliner/</span></div>
                  </IUrl>
                  <IStar><svg width="15" height="15" viewBox="0 0 16 16"><path d="M8 1l2.100 4.600 5 .6-3.700 3.400 1 5L8 12.200 3.600 14.600l1-5L.9 6.200l5-.6z" fill="none" stroke="currentColor" strokeWidth="1.200" /></svg></IStar>
                  <ExtPill>{[0, 1, 2, 3, 4, 5, 6, 7, 8].map(k => <Ext key={k} k={k} />)}</ExtPill>
                  <Avatar>R</Avatar>
                  <Kebab><span /><span /><span /></Kebab>
                </IToolbar>
                <PageWrap>
                  <Page>
                    <Heading>HTML 5 Outliner</Heading>
                    <Label>Input HTML:</Label>
                    <FileRow><Btn>Choose file</Btn><span>bootstrap.html</span></FileRow>
                    <Btn>Outline this!</Btn>
                    <Gap $h={21} />
                    <Label>URL:</Label>
                    <UrlField />
                    <Btn>Outline this!</Btn>
                    <Gap $h={22} />
                    <Label>HTML:</Label>
                    <Area readOnly defaultValue={"<doctype html>\n<title>Hello, world!</title>\n<h1>This is a section</h1>\n<section><h1>And this a subsection!</h1></section>"} />
                    <Btn>Outline this!</Btn>
                  </Page>
                  <ScrollCol><ScrollUp /><ScrollThumb /><ScrollRest /><ScrollDown /></ScrollCol>
                  <Cursor width="12" height="20" viewBox="0 0 12 20"><path d="M1 1v15l4-3 3 6 2-1-3-6h5z" fill="#333" stroke="#fff" strokeWidth=".6" /></Cursor>
                </PageWrap>
              </ChromeWin>
              <Grip />
            </Desktop>
            <Rail>
              <HandWrap>
                <HandBtn>
                  <svg width="20" height="24" viewBox="0 0 20 24"><path d="M6 13V4M9.500 12V2M13 12V3M16 13V6M6 13l-3-2c-2 0-2 2-1 3l4 6c2 3 9 3 10-1 1-2 0-6 0-6" stroke="#fff" strokeWidth="1.500" fill="none" strokeLinecap="round" /></svg>
                </HandBtn>
              </HandWrap>
              <RailActive>
                <svg width="24" height="20" viewBox="0 0 24 20"><circle cx="9" cy="5.500" r="4.500" fill="none" stroke="#66748f" strokeWidth="1.700" /><circle cx="18.500" cy="6.500" r="3" fill="none" stroke="#66748f" strokeWidth="1.700" /><path d="M1 18c0-7 15-7 15 0zM15 11.500c4-1 8 1 8 5l-2 2" fill="none" stroke="#66748f" strokeWidth="1.700" /></svg>
              </RailActive>
              <RailItem>
                <svg width="23" height="20" viewBox="0 0 23 20"><path d="M11 1c5.500 0 10 3.500 10 8 0 2-1 4-1.500 5l1.500 4-5-1.500C8 19 1 15 1 9c0-4.500 4.500-8 10-8z" fill="none" stroke="#7f90a8" strokeWidth="1.500" /></svg>
              </RailItem>
              <RailItem>
                <svg width="24" height="24" viewBox="0 0 24 24"><circle cx="12" cy="12" r="6" fill="none" stroke="#8596ad" strokeWidth="4" /><g stroke="#8596ad" strokeWidth="4"><path d="M12 1v4M12 19v4M1 12h4M19 12h4M4.200 4.200l2.900 2.900M16.900 16.900l2.900 2.900M19.800 4.200l-2.900 2.900M7.100 16.900l-2.900 2.900" /></g></svg>
              </RailItem>
              <RailSpacer />
              <svg width="16" height="16" viewBox="0 0 16 16"><g fill="#8b97aa"><path d="M0 0h6L4 2l2.500 2.500L4.500 6.500 2 4 0 6zM16 0v6l-2-2-2.500 2.500-2-2L12 2l-2-2zM0 16v-6l2 2 2.500-2.500 2 2L4 14l2 2zM16 16h-6l2-2-2.500-2.500 2-2L14 12l2-2z" /></g></svg>
              <Exit>Exit</Exit>
            </Rail>
            <Panel>
              <PanelHead>
                <PanelTitle>Attendees</PanelTitle>
                <PanelClose><X s={13} w={1.200} /></PanelClose>
              </PanelHead>
              <PanelBody>
                <List>
                  {people.map((n, i) => (
                    <Row key={n} $on={i === 15}>
                      <RowMic>{i === 15 ? <MicOn /> : <MicMuted />}</RowMic>
                      <RowName>{n}</RowName>
                      {i === 0 && <Organizer>organizer</Organizer>}
                      {i === 14 && <Chevron><svg width="8" height="5" viewBox="0 0 8 5"><path d="M.5.5L4 4 7.500.5" stroke="currentColor" fill="none" /></svg></Chevron>}
                    </Row>
                  ))}
                </List>
                <Track><TrackThumb /></Track>
              </PanelBody>
            </Panel>
          </Content>
        </FirefoxWin>
      </Body>
    </Screen>
  );
}
